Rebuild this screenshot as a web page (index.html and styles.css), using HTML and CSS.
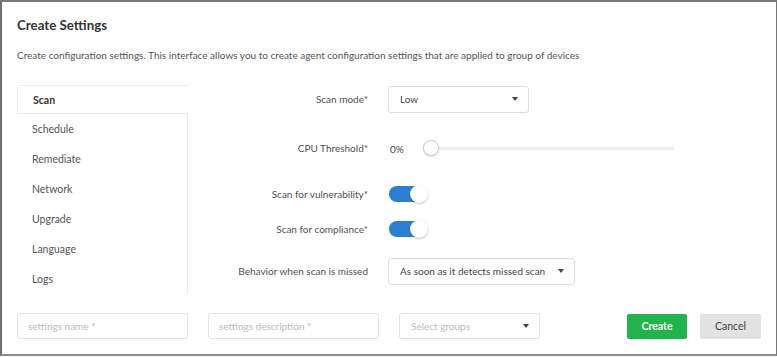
FILE: index.html
```html
<!DOCTYPE html>
<html>
<head>
<meta charset="utf-8">
<link rel="stylesheet" href="styles.css">
</head>
<body>
<div class="modal">
  <h1 class="title">Create Settings</h1>
  <p class="desc">Create configuration settings. This interface allows you to create agent configuration settings that are applied to group of devices</p>
  <div class="content">
    <ul class="nav">
      <li class="nav-item active">Scan</li>
      <li class="nav-item">Schedule</li>
      <li class="nav-item">Remediate</li>
      <li class="nav-item">Network</li>
      <li class="nav-item">Upgrade</li>
      <li class="nav-item">Language</li>
      <li class="nav-item">Logs</li>
    </ul>
    <div class="form">
      <div class="row">
        <div class="label">Scan mode*</div>
        <div class="select select-mode"><span>Low</span><span class="caret"></span></div>
      </div>
      <div class="row row-cpu">
        <div class="label">CPU Threshold*</div>
        <div class="slider-wrap">
          <span class="pct">0%</span>
          <div class="slider"><div class="track"></div><div class="thumb"></div></div>
        </div>
      </div>
      <div class="row row-vuln">
        <div class="label">Scan for vulnerability*</div>
        <div class="toggle"><div class="knob"></div></div>
      </div>
      <div class="row row-comp">
        <div class="label">Scan for compliance*</div>
        <div class="toggle"><div class="knob"></div></div>
      </div>
      <div class="row row-beh">
        <div class="label">Behavior when scan is missed</div>
        <div class="select select-beh"><span>As soon as it detects missed scan</span><span class="caret"></span></div>
      </div>
    </div>
  </div>
  <div class="footer">
    <div class="input input-name">settings name *</div>
    <div class="input input-desc">settings description *</div>
    <div class="select select-groups"><span class="ph">Select groups</span><span class="caret"></span></div>
    <div class="spacer"></div>
    <button class="btn btn-create">Create</button>
    <button class="btn btn-cancel">Cancel</button>
  </div>
</div>
</body>
</html>
```

FILE: styles.css
```css
* { box-sizing: border-box; }
html, body { margin: 0; padding: 0; }
body {
  width: 777px;
  height: 357px;
  background: #fff;
  font-family: Lato, "Open Sans", "Liberation Sans", sans-serif;
  color: #444;
  overflow: hidden;
}
.modal {
  width: 777px;
  height: 356px;
  border: 1px solid #777;
  border-left: 2px solid #6f6f6f;
  border-top: 2px solid #7a7a7a;
  border-bottom: 2px solid #8a8a8a;
  padding: 0 15px 0 15px;
  display: flex;
  flex-direction: column;
}
.title {
  margin: 14px 0 0 0;
  font-size: 13.3px;
  font-weight: 700;
  color: #333;
  line-height: 18px;
}
.desc {
  margin: 14px 0 0 0;
  font-size: 10px;
  line-height: 14px;
  color: #555;
}
.content {
  display: flex;
  margin-top: 23px;
  height: 210px;
}
.nav {
  list-style: none;
  margin: 0;
  padding: 0;
  width: 171px;
  flex: none;
}
.nav-item {
  height: 30px;
  line-height: 30px;
  padding-left: 15px;
  font-size: 10.5px;
  color: #555;
  border-right: 1px solid #ebebeb;
}
.nav-item.active {
  height: 29px;
  line-height: 28px;
  font-weight: 700;
  color: #333;
  border: 1px solid #ebebeb;
  border-right: none;
}
.form {
  flex: 1;
  display: flex;
  flex-direction: column;
}
.row {
  display: flex;
  align-items: center;
  height: 28px;
}
.row-cpu { margin-top: 21px; }
.row-vuln { margin-top: 18px; }
.row-comp { margin-top: 7px; }
.row-beh { margin-top: 14px; }
.label {
  width: 180px;
  text-align: right;
  font-size: 10px;
  color: #505050;
  flex: none;
}
.select {
  margin-left: 20px;
  height: 27px;
  border: 1px solid #ddd;
  border-radius: 3px;
  display: flex;
  align-items: center;
  justify-content: space-between;
  padding: 0 10px 0 11px;
  font-size: 10px;
  color: #444;
  background: #fff;
  white-space: nowrap;
}
.select-mode { width: 141px; }
.select-beh { width: 187px; }
.caret {
  width: 0;
  height: 0;
  border-left: 3px solid transparent;
  border-right: 3px solid transparent;
  border-top: 4px solid #444;
}
.slider-wrap {
  margin-left: 22px;
  display: flex;
  align-items: center;
}
.pct {
  font-size: 10px;
  color: #444;
  margin-top: 1px;
}
.slider {
  position: relative;
  width: 251px;
  height: 16px;
  margin-left: 19px;
}
.track {
  position: absolute;
  left: 6px;
  right: 0;
  top: 7px;
  height: 3px;
  background: #ededed;
  border-radius: 2px;
}
.thumb {
  position: absolute;
  left: 0;
  top: 0;
  width: 16px;
  height: 16px;
  border-radius: 50%;
  background: #fff;
  border: 1px solid #ccc;
  box-shadow: 0 1px 2px rgba(0,0,0,0.12);
}
.toggle {
  margin-left: 21px;
  width: 38px;
  height: 16px;
  border-radius: 8px;
  background: #2a7fd3;
  position: relative;
}
.knob {
  position: absolute;
  right: -1px;
  top: -1px;
  width: 18px;
  height: 18px;
  border-radius: 50%;
  background: #fff;
  box-shadow: 0 1px 2px rgba(0,0,0,0.25);
}
.footer {
  display: flex;
  align-items: center;
  margin-top: 18px;
  height: 26px;
}
.input {
  height: 26px;
  border: 1px solid #e2e2e2;
  border-radius: 3px;
  font-size: 10px;
  color: #bbb;
  display: flex;
  align-items: center;
  padding-left: 10px;
}
.input-name { width: 171px; }
.input-desc { width: 171px; margin-left: 20px; }
.select-groups {
  width: 141px;
  height: 26px;
  margin-left: 20px;
  border-color: #e2e2e2;
}
.ph { color: #bbb; }
.spacer { flex: 1; }
.btn {
  height: 25px;
  border: none;
  border-radius: 2px;
  font-family: inherit;
  font-size: 10.5px;
  padding: 0;
}
.btn-create {
  width: 60px;
  background: #22b44c;
  color: #fff;
  font-weight: 700;
}
.btn-cancel {
  width: 61px;
  margin-left: 13px;
  background: #e2e2e2;
  color: #444;
}
```
